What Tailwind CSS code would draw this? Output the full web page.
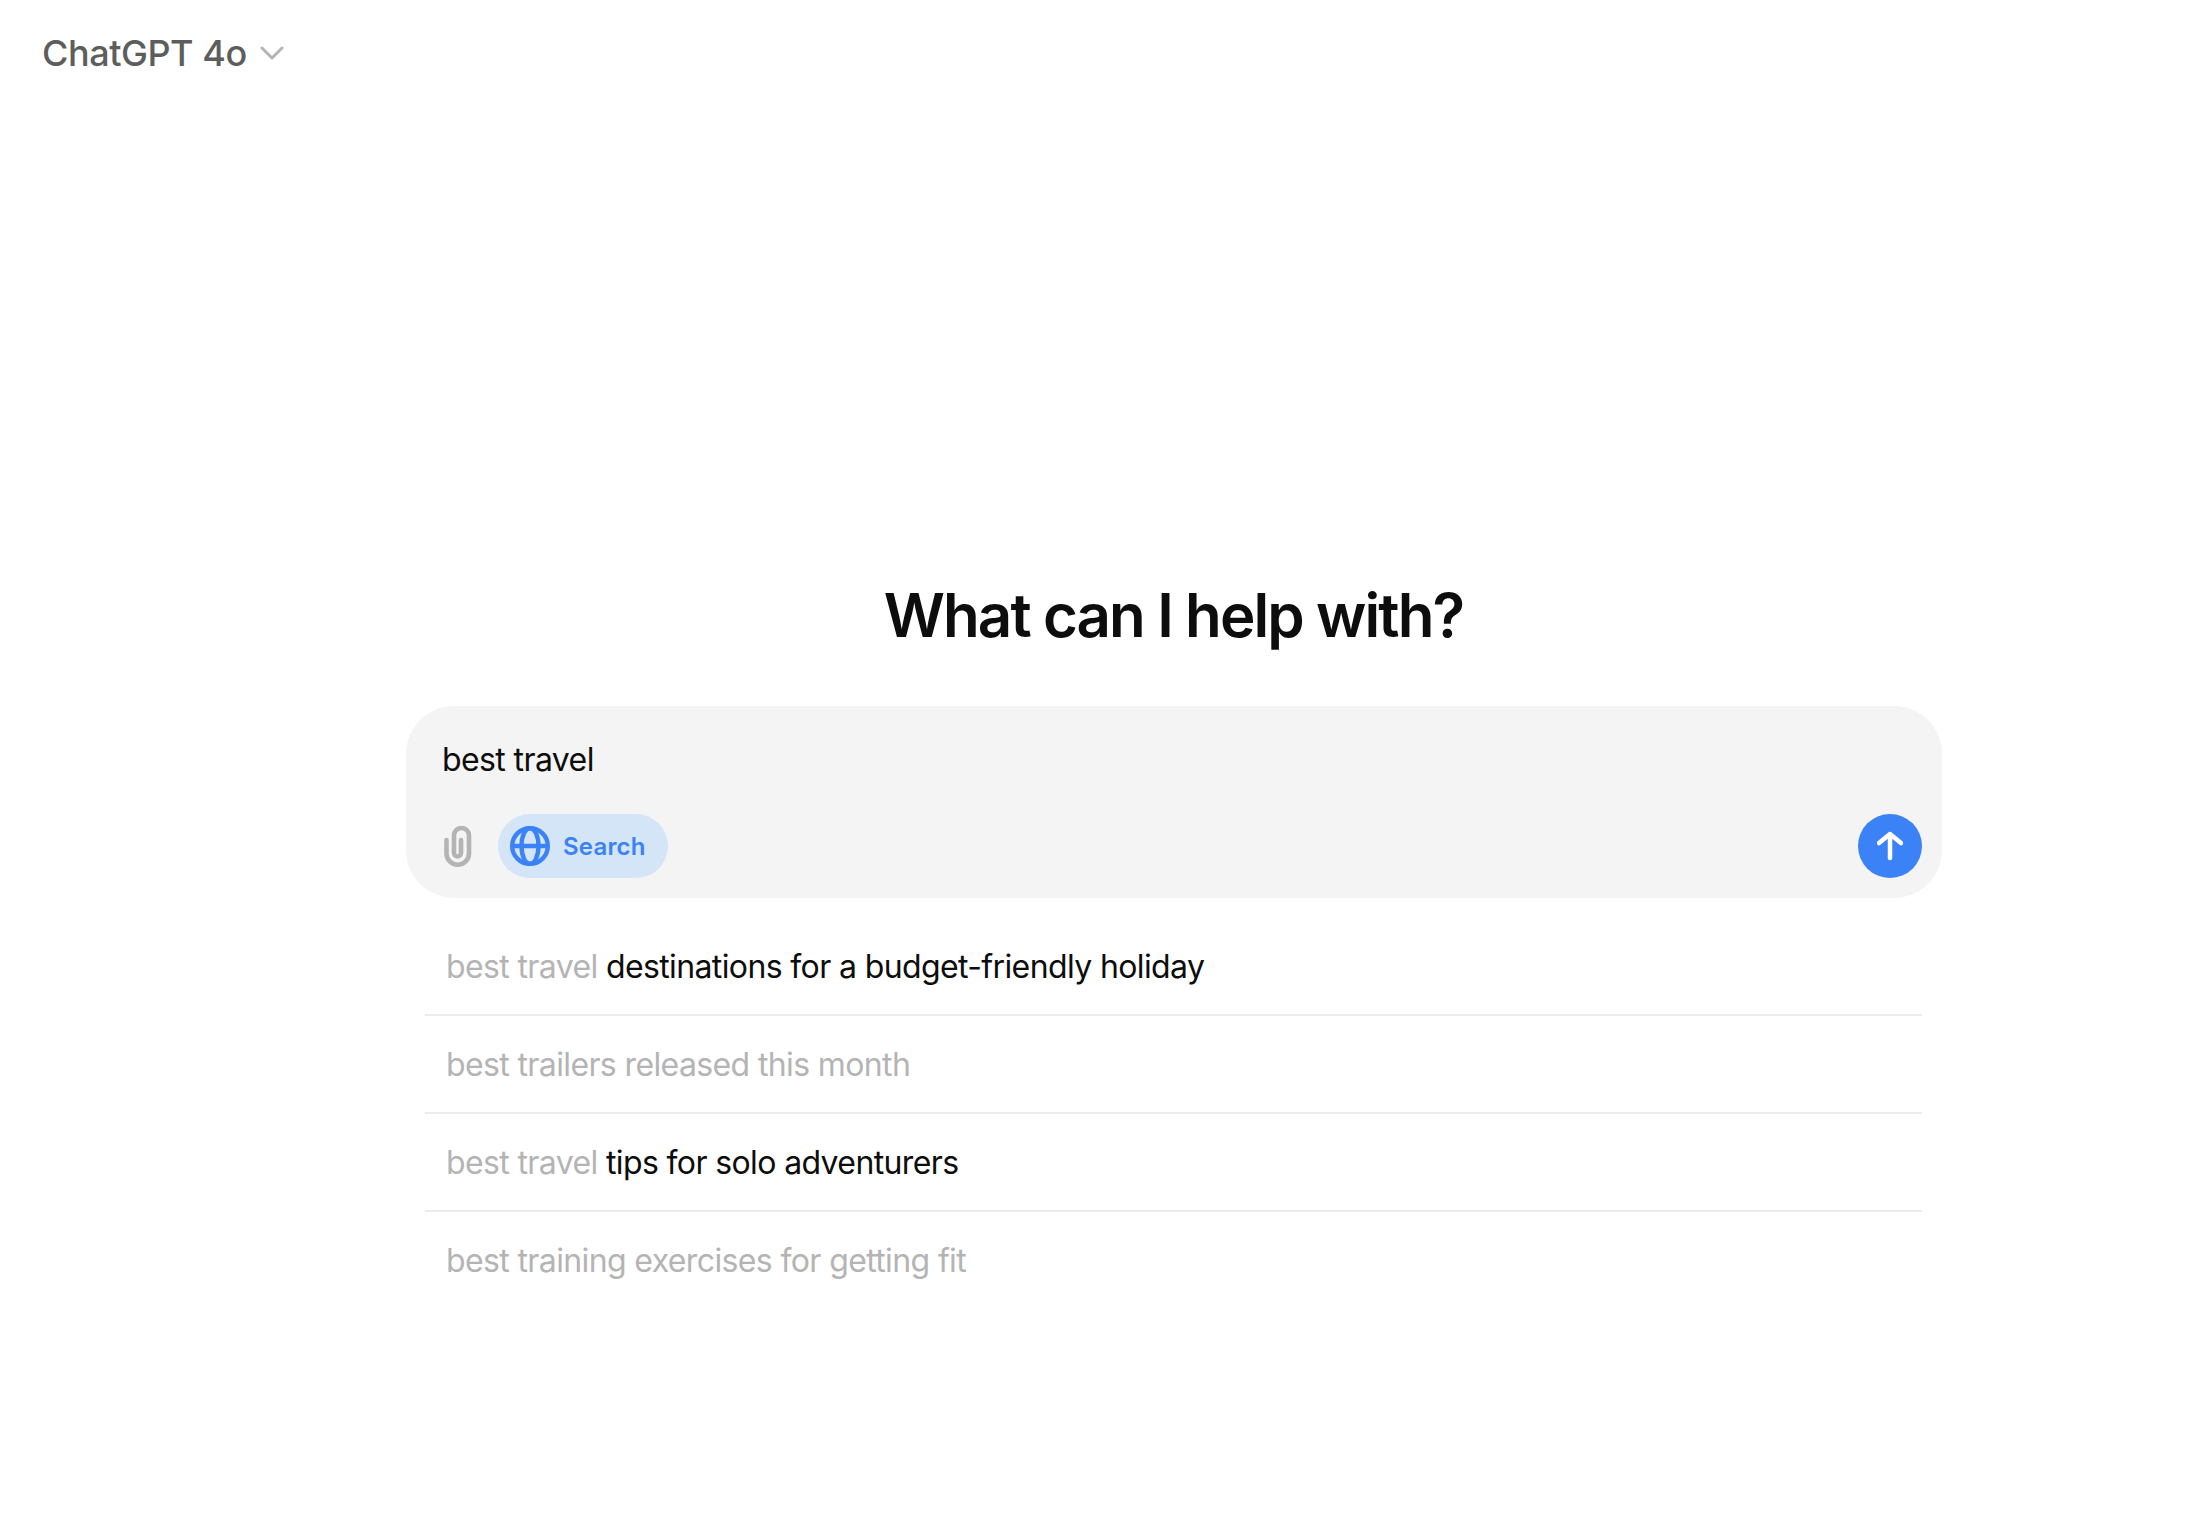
<!DOCTYPE html>
<html lang="en">

<head>
    <meta charset="UTF-8">
    <meta name="viewport" content="width=device-width, initial-scale=1.0">
    <title>ChatGPT</title>
    <script src="https://cdn.jsdelivr.net/npm/@tailwindcss/browser@4"></script>
</head>

<body class="bg-white min-h-screen font-['Inter',sans-serif] text-[#0d0d0d]">
    <!-- Model picker -->
    <header class="flex items-start gap-[13px] pl-[42px] pt-[31px] h-[579px]">
        <span class="text-[36px] leading-[44px] font-medium tracking-[-0.45px] text-[#5d5d5d]">ChatGPT 4o</span>
        <svg class="mt-[14px]" width="24" height="16" viewBox="0 0 24 16" fill="none" stroke="#b4b4b4" stroke-width="3" stroke-linecap="round" stroke-linejoin="round">
            <path d="M2 3l10 10L22 3" />
        </svg>
    </header>

    <main class="w-[1536px] ml-[406px]">
        <h1 class="text-[60px] leading-[72px] font-semibold text-center tracking-[-1.9px] pr-[1px]">What can I help with?</h1>

        <!-- Composer -->
        <div class="mt-[55px] h-[192px] rounded-[48px] bg-[#f4f4f4] pl-[36px] pr-[20px] pt-[34px]">
            <div class="text-[32px] leading-[40px] tracking-[-0.6px]">best travel</div>
            <div class="mt-[34px] flex items-center">
                <svg class="mt-[1px]" width="32" height="42" viewBox="0 0 32 42" fill="none" stroke="#b4b4b4" stroke-width="4.6" stroke-linecap="round">
                    <path d="M4.5 14v13.5a11.25 11.25 0 0 0 22.5 0V9.5a7.5 7.5 0 0 0-15 0V27a3.5 3.5 0 0 0 7 0V14" />
                </svg>
                <div class="ml-[24px] h-[64px] w-[170px] rounded-full bg-[#d3e5f7] flex items-center pl-[12px] gap-[13px]">
                    <svg width="40" height="40" viewBox="0 0 40 40" fill="none" stroke="#3b82f6" stroke-width="4.4">
                        <circle cx="20" cy="20" r="17.8" />
                        <ellipse cx="20" cy="20" rx="8.5" ry="17.8" />
                        <path d="M2 20h36" />
                    </svg>
                    <span class="text-[24px] font-semibold tracking-[0.2px] text-[#3b82f6] pt-[1px]">Search</span>
                </div>
                <button class="ml-auto w-[64px] h-[64px] rounded-full bg-[#3b82f6] flex items-center justify-center">
                    <svg width="26" height="32" viewBox="0 0 26 32" fill="none" stroke="#fff" stroke-width="4.5" stroke-linecap="round" stroke-linejoin="round">
                        <path d="M13 28V4M2 13L13 4l11 9" />
                    </svg>
                </button>
            </div>
        </div>

        <!-- Suggestions -->
        <ul class="mt-[20px] ml-[19px] mr-[20px] text-[32px] leading-[40px] tracking-[-0.62px] text-[#b4b4b4] divide-y-2 divide-[#ececec]">
            <li class="h-[98px] px-[21px] pt-[29px]">best travel <span class="text-[#0d0d0d]">destinations for a budget-friendly holiday</span></li>
            <li class="h-[98px] px-[21px] pt-[29px]">best trailers released this month</li>
            <li class="h-[98px] px-[21px] pt-[29px]">best travel <span class="text-[#0d0d0d]">tips for solo adventurers</span></li>
            <li class="h-[98px] px-[21px] pt-[29px]">best training exercises for getting fit</li>
        </ul>
    </main>
</body>

</html>
